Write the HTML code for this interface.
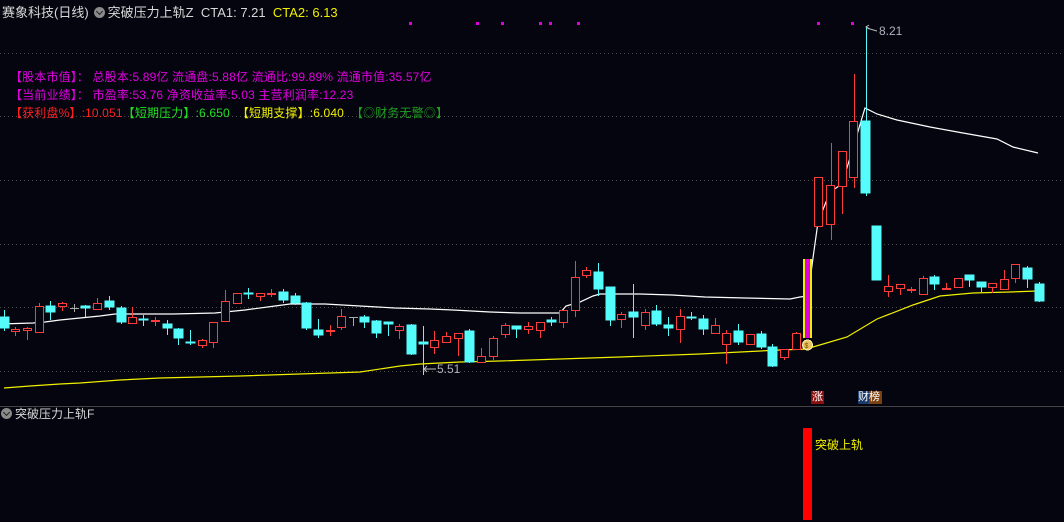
<!DOCTYPE html>
<html><head><meta charset="utf-8"><style>
html,body{margin:0;padding:0;background:#05050f;width:1064px;height:522px;overflow:hidden;font-family:"Liberation Sans","Noto Sans CJK SC",sans-serif;}
.t{position:absolute;white-space:nowrap;font-size:12px;line-height:14px;}
.inf{letter-spacing:0.15px}
.ic{display:inline-block;width:11px;height:11px;border-radius:50%;background:#8a8a8a;vertical-align:-1px;margin:0 3px 0 5px;position:relative}
.ic:after{content:"";position:absolute;left:3px;top:2px;width:4px;height:4px;border-right:1.5px solid #222;border-bottom:1.5px solid #222;transform:rotate(45deg)}
</style></head><body>
<svg width="1064" height="522" style="position:absolute;left:0;top:0" shape-rendering="crispEdges">
<g stroke="#4a4a4a" stroke-dasharray="1,3">
<line x1="0" y1="53.5" x2="1064" y2="53.5"/><line x1="0" y1="116.5" x2="1064" y2="116.5"/><line x1="0" y1="180.5" x2="1064" y2="180.5"/><line x1="0" y1="244.5" x2="1064" y2="244.5"/><line x1="0" y1="307.5" x2="1064" y2="307.5"/><line x1="0" y1="371.5" x2="1064" y2="371.5"/>
</g>
<line x1="0" y1="406.5" x2="1064" y2="406.5" stroke="#444"/>
<g fill="#e000e0"><rect x="409" y="22" width="3" height="3"/><rect x="476" y="22" width="3" height="3"/><rect x="501" y="22" width="3" height="3"/><rect x="539" y="22" width="3" height="3"/><rect x="549" y="22" width="3" height="3"/><rect x="577" y="22" width="3" height="3"/><rect x="817" y="22" width="3" height="3"/><rect x="851" y="22" width="3" height="3"/></g>
<polyline fill="none" stroke="#ffffff" shape-rendering="auto" stroke-width="1.2" points="0,324 33,323 45,322 60,320 80,318 100,316 115,314 173,314 215,313 245,310 275,306 290,304 325,304 360,306 395,308 430,309 453,310 490,312 520,313 560,313 566,306 580,302 593,296 600,294 640,294 672,295 705,297 745,298 790,299 800,297 808,296 813,258 818,222 830,192 842,184 853,148 865,108 877,114 897,120 930,127 963,133 997,139 1013,147 1038,153"/>
<polyline fill="none" stroke="#f0f000" shape-rendering="auto" stroke-width="1.2" points="4,388 30,386 60,384 80,383 120,380 160,378 200,377 240,376 300,374 360,372 400,366 420,364 460,362 500,361 560,359 620,357 700,354 780,350 808,349 813,347 847,337 877,319 913,305 940,296 973,293 1010,292 1038,291"/>
<g stroke="#54fcfc" fill="#54fcfc">
<line x1="4.5" y1="310" x2="4.5" y2="331"/><rect x="0" y="317" width="9" height="11"/>
<line x1="50.5" y1="301" x2="50.5" y2="320"/><rect x="46" y="306" width="9" height="6"/>
<line x1="85.5" y1="305" x2="85.5" y2="317"/><rect x="81" y="306" width="9" height="2"/>
<line x1="109.5" y1="296" x2="109.5" y2="310"/><rect x="105" y="301" width="9" height="6"/>
<line x1="121.5" y1="306" x2="121.5" y2="324"/><rect x="117" y="308" width="9" height="14"/>
<line x1="143.5" y1="315" x2="143.5" y2="326"/><rect x="139" y="319" width="9" height="1"/>
<line x1="167.5" y1="320" x2="167.5" y2="335"/><rect x="163" y="324" width="9" height="4"/>
<line x1="178.5" y1="328" x2="178.5" y2="345"/><rect x="174" y="329" width="9" height="9"/>
<line x1="190.5" y1="330" x2="190.5" y2="345"/><rect x="186" y="342" width="9" height="1"/>
<line x1="248.5" y1="288" x2="248.5" y2="299"/><rect x="244" y="293" width="9" height="1"/>
<line x1="283.5" y1="289" x2="283.5" y2="303"/><rect x="279" y="292" width="9" height="8"/>
<line x1="295.5" y1="293" x2="295.5" y2="305"/><rect x="291" y="296" width="9" height="7"/>
<line x1="306.5" y1="302" x2="306.5" y2="330"/><rect x="302" y="303" width="9" height="25"/>
<line x1="318.5" y1="319" x2="318.5" y2="338"/><rect x="314" y="330" width="9" height="5"/>
<line x1="364.5" y1="315" x2="364.5" y2="328"/><rect x="360" y="317" width="9" height="5"/>
<line x1="376.5" y1="320" x2="376.5" y2="338"/><rect x="372" y="321" width="9" height="12"/>
<line x1="388.5" y1="322" x2="388.5" y2="336"/><rect x="384" y="322" width="9" height="2"/>
<line x1="411.5" y1="324" x2="411.5" y2="355"/><rect x="407" y="325" width="9" height="29"/>
<line x1="423.5" y1="326" x2="423.5" y2="375"/><rect x="419" y="342" width="9" height="2"/>
<line x1="469.5" y1="329" x2="469.5" y2="363"/><rect x="465" y="331" width="9" height="31"/>
<line x1="516.5" y1="326" x2="516.5" y2="338"/><rect x="512" y="326" width="9" height="3"/>
<line x1="551.5" y1="317" x2="551.5" y2="326"/><rect x="547" y="320" width="9" height="2"/>
<line x1="598.5" y1="263" x2="598.5" y2="296"/><rect x="594" y="272" width="9" height="17"/>
<line x1="610.5" y1="287" x2="610.5" y2="326"/><rect x="606" y="287" width="9" height="33"/>
<line x1="633.5" y1="284" x2="633.5" y2="338"/><rect x="629" y="312" width="9" height="5"/>
<line x1="656.5" y1="305" x2="656.5" y2="326"/><rect x="652" y="311" width="9" height="13"/>
<line x1="668.5" y1="317" x2="668.5" y2="336"/><rect x="664" y="325" width="9" height="3"/>
<line x1="691.5" y1="312" x2="691.5" y2="320"/><rect x="687" y="317" width="9" height="1"/>
<line x1="703.5" y1="315" x2="703.5" y2="335"/><rect x="699" y="319" width="9" height="10"/>
<line x1="738.5" y1="324" x2="738.5" y2="345"/><rect x="734" y="331" width="9" height="11"/>
<line x1="761.5" y1="331" x2="761.5" y2="349"/><rect x="757" y="334" width="9" height="13"/>
<line x1="772.5" y1="344" x2="772.5" y2="367"/><rect x="768" y="347" width="9" height="19"/>
<line x1="866.5" y1="26" x2="866.5" y2="196"/><rect x="861" y="121" width="9" height="72"/>
<rect x="872" y="226" width="9" height="54"/>
<line x1="934.5" y1="275" x2="934.5" y2="290"/><rect x="930" y="277" width="9" height="7"/>
<line x1="969.5" y1="275" x2="969.5" y2="287"/><rect x="965" y="275" width="9" height="5"/>
<line x1="981.5" y1="282" x2="981.5" y2="292"/><rect x="977" y="282" width="9" height="5"/>
<line x1="1027.5" y1="266" x2="1027.5" y2="288"/><rect x="1023" y="268" width="9" height="11"/>
<line x1="1039.5" y1="282" x2="1039.5" y2="302"/><rect x="1035" y="284" width="9" height="17"/>
</g>
<g stroke="#ff3c3c" fill="#05050f">
<line x1="15.5" y1="327" x2="15.5" y2="336"/><rect x="11.5" y="329.5" width="8" height="2"/>
<line x1="27.5" y1="327" x2="27.5" y2="340"/><rect x="23.5" y="328.5" width="8" height="2"/>
<line x1="39.5" y1="303" x2="39.5" y2="332"/><rect x="35.5" y="306.5" width="8" height="26"/>
<line x1="62.5" y1="302" x2="62.5" y2="311"/><rect x="58.5" y="303.5" width="8" height="3"/>
<line x1="97.5" y1="298" x2="97.5" y2="309"/><rect x="93.5" y="303.5" width="8" height="6"/>
<line x1="132.5" y1="307" x2="132.5" y2="323"/><rect x="128.5" y="317.5" width="8" height="6"/>
<line x1="155.5" y1="317" x2="155.5" y2="326"/><rect x="151.5" y="320.5" width="8" height="1"/>
<line x1="202.5" y1="339" x2="202.5" y2="348"/><rect x="198.5" y="340.5" width="8" height="5"/>
<line x1="213.5" y1="322" x2="213.5" y2="348"/><rect x="209.5" y="322.5" width="8" height="20"/>
<line x1="225.5" y1="290" x2="225.5" y2="321"/><rect x="221.5" y="301.5" width="8" height="20"/>
<rect x="233.5" y="293.5" width="8" height="10"/>
<line x1="260.5" y1="293" x2="260.5" y2="301"/><rect x="256.5" y="293.5" width="8" height="3"/>
<line x1="271.5" y1="289" x2="271.5" y2="297"/><rect x="267.5" y="293.5" width="8" height="1"/>
<line x1="330.5" y1="325" x2="330.5" y2="336"/><rect x="326.5" y="330.5" width="8" height="1"/>
<line x1="341.5" y1="309" x2="341.5" y2="330"/><rect x="337.5" y="316.5" width="8" height="11"/>
<line x1="399.5" y1="324" x2="399.5" y2="339"/><rect x="395.5" y="326.5" width="8" height="4"/>
<line x1="434.5" y1="331" x2="434.5" y2="354"/><rect x="430.5" y="340.5" width="8" height="7"/>
<line x1="446.5" y1="332" x2="446.5" y2="342"/><rect x="442.5" y="336.5" width="8" height="6"/>
<line x1="458.5" y1="333" x2="458.5" y2="356"/><rect x="454.5" y="333.5" width="8" height="5"/>
<line x1="481.5" y1="348" x2="481.5" y2="362"/><rect x="477.5" y="356.5" width="8" height="6"/>
<line x1="493.5" y1="336" x2="493.5" y2="360"/><rect x="489.5" y="338.5" width="8" height="18"/>
<line x1="505.5" y1="323" x2="505.5" y2="338"/><rect x="501.5" y="325.5" width="8" height="9"/>
<line x1="528.5" y1="322" x2="528.5" y2="334"/><rect x="524.5" y="326.5" width="8" height="3"/>
<line x1="540.5" y1="322" x2="540.5" y2="338"/><rect x="536.5" y="322.5" width="8" height="8"/>
<line x1="563.5" y1="310" x2="563.5" y2="328"/><rect x="559.5" y="310.5" width="8" height="12"/>
<line x1="575.5" y1="261" x2="575.5" y2="317"/><rect x="571.5" y="277.5" width="8" height="33"/>
<line x1="586.5" y1="267" x2="586.5" y2="278"/><rect x="582.5" y="270.5" width="8" height="5"/>
<line x1="621.5" y1="312" x2="621.5" y2="328"/><rect x="617.5" y="314.5" width="8" height="5"/>
<line x1="645.5" y1="309" x2="645.5" y2="330"/><rect x="641.5" y="312.5" width="8" height="13"/>
<line x1="680.5" y1="309" x2="680.5" y2="343"/><rect x="676.5" y="316.5" width="8" height="13"/>
<line x1="715.5" y1="318" x2="715.5" y2="333"/><rect x="711.5" y="325.5" width="8" height="8"/>
<line x1="726.5" y1="330" x2="726.5" y2="364"/><rect x="722.5" y="333.5" width="8" height="11"/>
<rect x="746.5" y="334.5" width="8" height="10"/>
<line x1="784.5" y1="349" x2="784.5" y2="360"/><rect x="780.5" y="349.5" width="8" height="8"/>
<line x1="796.5" y1="332" x2="796.5" y2="350"/><rect x="792.5" y="333.5" width="8" height="16"/>
<rect x="814.5" y="177.5" width="8" height="49"/>
<line x1="831.5" y1="143" x2="831.5" y2="240"/><rect x="826.5" y="185.5" width="8" height="39"/>
<line x1="842.5" y1="151" x2="842.5" y2="214"/><rect x="838.5" y="151.5" width="8" height="35"/>
<line x1="854.5" y1="74" x2="854.5" y2="188"/><rect x="849.5" y="121.5" width="8" height="56"/>
<line x1="888.5" y1="275" x2="888.5" y2="297"/><rect x="884.5" y="286.5" width="8" height="5"/>
<line x1="900.5" y1="284" x2="900.5" y2="295"/><rect x="896.5" y="284.5" width="8" height="4"/>
<line x1="911.5" y1="287" x2="911.5" y2="293"/><rect x="907.5" y="289.5" width="8" height="1"/>
<line x1="923.5" y1="276" x2="923.5" y2="294"/><rect x="919.5" y="278.5" width="8" height="16"/>
<line x1="946.5" y1="283" x2="946.5" y2="290"/><rect x="942.5" y="288.5" width="8" height="1"/>
<rect x="954.5" y="278.5" width="8" height="9"/>
<line x1="992.5" y1="283" x2="992.5" y2="293"/><rect x="988.5" y="283.5" width="8" height="4"/>
<line x1="1004.5" y1="270" x2="1004.5" y2="289"/><rect x="1000.5" y="279.5" width="8" height="10"/>
<line x1="1015.5" y1="264" x2="1015.5" y2="283"/><rect x="1011.5" y="264.5" width="8" height="14"/>
</g>
<g stroke="#aaaaaa"><line x1="70" y1="308.5" x2="79" y2="308.5"/><line x1="74.5" y1="304" x2="74.5" y2="312"/><line x1="349" y1="317.5" x2="358" y2="317.5"/><line x1="353.5" y1="317" x2="353.5" y2="326"/></g>
<rect x="803" y="259" width="9" height="79" fill="#f0f000"/><rect x="805" y="259" width="5" height="79" fill="#e000e0"/>
<circle cx="807.5" cy="345" r="5" fill="#e8c060" stroke="#fff3b0"/>
<text x="804.5" y="348" font-size="7" fill="#7a5000" font-family="Liberation Sans">$</text>
<g stroke="#bbbbbb" fill="none" shape-rendering="auto"><polyline points="866,27 870,29 877,31"/><polyline points="869,25 866,27 869,29"/><polyline points="424,369 436,369"/><polyline points="427,366 424,369 427,372"/></g>
<rect x="803" y="428" width="9" height="92" fill="#ff0000"/>
</svg>
<div class="t" style="left:2px;top:6px;font-size:13px;color:#d8d8d8">赛象科技(日线)<span class="ic"></span>突破压力上轨Z&nbsp; CTA1: 7.21&nbsp; <span style="color:#f0f000">CTA2: 6.13</span></div>
<div class="t inf" style="left:10px;top:70px;color:#e000e0">【股本市值】： 总股本:5.89亿 流通盘:5.88亿 流通比:99.89% 流通市值:35.57亿</div>
<div class="t inf" style="left:10px;top:88px;color:#e000e0">【当前业绩】： 市盈率:53.76 净资收益率:5.03 主营利润率:12.23</div>
<div class="t inf" style="left:10px;top:106px;color:#ff2020">【获利盘%】:10.051<span style="color:#20e020">【短期压力】:6.650</span>&nbsp; <span style="color:#f0f000">【短期支撑】:6.040</span>&nbsp; <span style="color:#20a020">【◎财务无警◎】</span></div>
<div class="t" style="left:879px;top:24px;color:#b0b0c0">8.21</div>
<div class="t" style="left:437px;top:362px;color:#b0b0c0">5.51</div>
<div class="t" style="left:811px;top:391px;width:13px;height:13px;background:#8a1010;color:#fff;font-size:11px;line-height:13px;text-align:center">涨</div>
<div class="t" style="left:858px;top:391px;width:11px;height:13px;background:#1a3a6a;color:#fff;font-size:11px;line-height:13px;overflow:hidden">财</div>
<div class="t" style="left:869px;top:391px;width:13px;height:13px;background:#7a4010;color:#fff;font-size:11px;line-height:13px;">榜</div>
<div class="t" style="left:-4px;top:407px;font-size:12px;color:#d8d8d8"><span class="ic"></span>突破压力上轨F</div>
<div class="t" style="left:815px;top:438px;color:#f0f000">突破上轨</div>
</body></html>
